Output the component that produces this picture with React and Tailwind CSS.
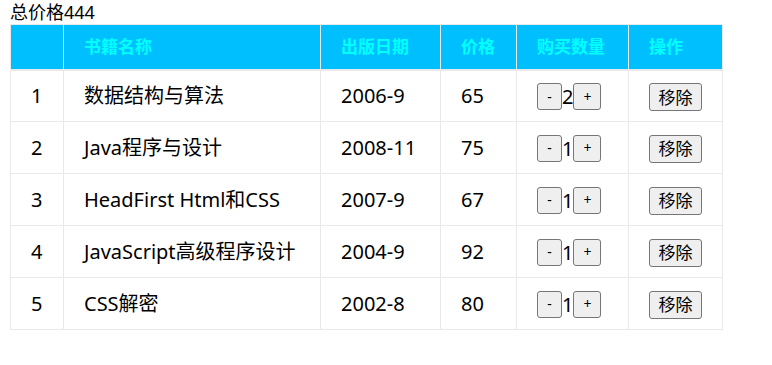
import React, { useState } from "react";

const initialBooks = [
  { id: 1, name: "数据结构与算法", date: "2006-9", price: 65, count: 2 },
  { id: 2, name: "Java程序与设计", date: "2008-11", price: 75, count: 1 },
  { id: 3, name: "HeadFirst Html和CSS", date: "2007-9", price: 67, count: 1 },
  { id: 4, name: "JavaScript高级程序设计", date: "2004-9", price: 92, count: 1 },
  { id: 5, name: "CSS解密", date: "2002-8", price: 80, count: 1 },
];

const font = "font-['Noto_Sans','Noto_Sans_CJK_SC',sans-serif]";
const btn =
  "bg-[#efefef] border border-[#767676] rounded-[3px] text-black leading-none align-middle";

export default function App() {
  const [books, setBooks] = useState(initialBooks);

  const total = books.reduce((sum, b) => sum + b.price * b.count, 0);

  const changeCount = (id, delta) => {
    setBooks(books.map(b => (b.id === id ? { ...b, count: Math.max(1, b.count + delta) } : b)));
  };

  const remove = (id) => setBooks(books.filter(b => b.id !== id));

  return (
    <div className={`${font} text-black bg-white min-h-[365px]`}>
      <div className="h-[24px] pl-[10px] text-[18px] leading-[24px]">总价格{total}</div>
      <table className="ml-[10px] w-[712px] table-fixed border-collapse border border-[#e9e9e9]">
        <colgroup>
          <col className="w-[53px]" />
          <col className="w-[257px]" />
          <col className="w-[120px]" />
          <col className="w-[76px]" />
          <col className="w-[112px]" />
          <col className="w-[94px]" />
        </colgroup>
        <thead>
          <tr className="bg-[#00bfff] text-[#00ffff] text-[17px] font-bold">
            {["", "书籍名称", "出版日期", "价格", "购买数量", "操作"].map((h, i) => (
              <th key={i} className="h-[45px] pl-[20px] text-left border border-[#e9e9e9] border-b-2 align-middle">
                {h}
              </th>
            ))}
          </tr>
        </thead>
        <tbody className="text-[20px]">
          {books.map((b) => (
            <tr key={b.id}>
              <td className="h-[52px] pl-[20px] border border-[#e9e9e9] align-middle">{b.id}</td>
              <td className="pl-[20px] border border-[#e9e9e9] align-middle whitespace-nowrap">{b.name}</td>
              <td className="pl-[20px] border border-[#e9e9e9] align-middle">{b.date}</td>
              <td className="pl-[20px] border border-[#e9e9e9] align-middle">{b.price}</td>
              <td className="pl-[20px] border border-[#e9e9e9] align-middle whitespace-nowrap">
                <button onClick={() => changeCount(b.id, -1)} className={`${btn} w-[25px] h-[27px] text-[14px]`}>-</button>
                <span className="align-middle">{b.count}</span>
                <button onClick={() => changeCount(b.id, 1)} className={`${btn} w-[28px] h-[27px] text-[14px]`}>+</button>
              </td>
              <td className="pl-[20px] border border-[#e9e9e9] align-middle">
                <button onClick={() => remove(b.id)} className={`${btn} w-[53px] h-[28px] text-[17px]`}>移除</button>
              </td>
            </tr>
          ))}
        </tbody>
      </table>
    </div>
  );
}
